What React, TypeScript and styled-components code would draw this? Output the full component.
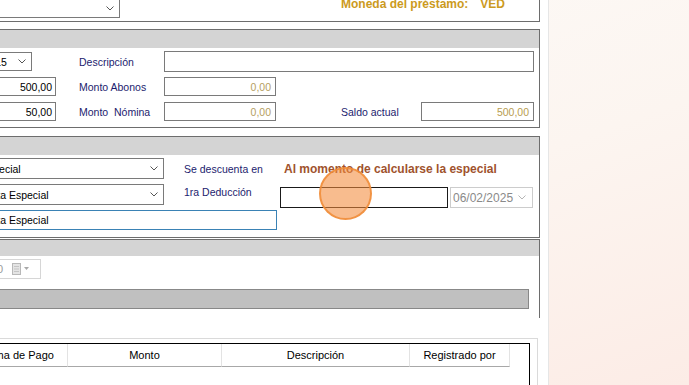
import React from 'react';
import styled, { createGlobalStyle } from 'styled-components';

const GlobalStyle = createGlobalStyle`
  html, body { margin: 0; padding: 0; }
  body { font-family: "Liberation Sans", Arial, sans-serif; font-size: 11px; color: #000; }
  * { box-sizing: border-box; }
`;

const Root = styled.div`
  position: relative;
  display: flex;
  width: 689px;
  height: 385px;
  overflow: hidden;
  background: linear-gradient(160deg, #fdfbf9 0%, #fcf5f0 55%, #fcece6 100%);
`;

const LeftPane = styled.div`
  flex: none;
  width: 549px;
  height: 100%;
  background: #fff;
  border-right: 1px solid #e6e6e6;
  overflow: hidden;
`;

const Form = styled.div`
  width: 640px;
  margin-left: -100px;
  display: flex;
  flex-direction: column;
`;

const Panel = styled.div<{ $mt?: number; $open?: 'top' | 'bottom' }>`
  margin-top: ${p => p.$mt ?? 0}px;
  border: 1px solid #6d6d6d;
  ${p => (p.$open === 'top' ? 'border-top: none;' : '')}
  ${p => (p.$open === 'bottom' ? 'border-bottom: none;' : '')}
  background: #fff;
`;

const PanelHeader = styled.div<{ $h: number }>`
  height: ${p => p.$h}px;
  background: #d4d4d4;
`;

const TopRow = styled.div`
  display: flex;
  align-items: flex-start;
  height: 21px;
`;

const Currency = styled.div`
  margin-left: 221px;
  margin-top: -2px;
  font-size: 12px;
  line-height: 12px;
  font-weight: bold;
  color: #cc9a1d;
  white-space: nowrap;
`;

const CurrencyCode = styled.span`
  margin-left: 12px;
`;

const ComboBox = styled.div<{ $w: number; $h: number; $ml?: number; $mt?: number; $pl?: number }>`
  flex: none;
  width: ${p => p.$w}px;
  height: ${p => p.$h}px;
  margin-left: ${p => p.$ml ?? 0}px;
  margin-top: ${p => p.$mt ?? 0}px;
  display: flex;
  align-items: center;
  justify-content: space-between;
  padding: 0 5px 0 ${p => p.$pl ?? 3}px;
  border: 1px solid #7a7a7a;
  background: #fff;
  font-size: 10.5px;
  white-space: nowrap;
  overflow: hidden;
`;

const TextBox = styled.div<{
  $w?: number;
  $h: number;
  $ml?: number;
  $mt?: number;
  $right?: boolean;
  $color?: string;
  $border?: string;
  $pr?: number;
  $pl?: number;
}>`
  flex: none;
  width: ${p => (p.$w ? `${p.$w}px` : '100%')};
  height: ${p => p.$h}px;
  margin-left: ${p => p.$ml ?? 0}px;
  margin-top: ${p => p.$mt ?? 0}px;
  display: flex;
  align-items: center;
  justify-content: ${p => (p.$right ? 'flex-end' : 'flex-start')};
  padding: 0 ${p => p.$pr ?? 3}px 0 ${p => p.$pl ?? 3}px;
  border: 1px solid ${p => p.$border ?? '#7a7a7a'};
  background: #fff;
  color: ${p => p.$color ?? '#000'};
  font-size: 10.5px;
  white-space: nowrap;
  overflow: hidden;
`;

const FieldGrid = styled.div`
  display: grid;
  grid-template-columns: 155px 23px 85px 112px 65px 80px 113px;
  grid-auto-rows: 21px;
  row-gap: 4px;
  align-items: center;
  padding: 3px 5px 5px 0;
`;

const Slot = styled.div<{ $col: number; $span?: number; $end?: boolean; $mr?: number }>`
  grid-column: ${p => p.$col} / span ${p => p.$span ?? 1};
  display: flex;
  align-items: center;
  justify-content: ${p => (p.$end ? 'flex-end' : 'flex-start')};
  padding-right: ${p => p.$mr ?? 0}px;
  min-width: 0;
`;

const Label = styled.span<{ $w?: number; $ml?: number; $lh?: number }>`
  flex: none;
  ${p => (p.$w ? `width: ${p.$w}px;` : '')}
  margin-left: ${p => p.$ml ?? 0}px;
  line-height: ${p => p.$lh ?? 14}px;
  font-size: 10.5px;
  color: #1c1c6e;
  white-space: nowrap;
`;

const Notice = styled.span`
  margin-left: 4px;
  font-size: 12px;
  font-weight: bold;
  color: #a0522d;
  white-space: nowrap;
`;

const Body = styled.div<{ $pad: string }>`
  display: flex;
  flex-direction: column;
  padding: ${p => p.$pad};
`;

const Row = styled.div<{ $h: number; $mt?: number; $top?: boolean }>`
  display: flex;
  align-items: ${p => (p.$top ? 'flex-start' : 'center')};
  height: ${p => p.$h}px;
  margin-top: ${p => p.$mt ?? 0}px;
`;

const DatePicker = styled.div<{ $w: number; $h: number; $ml?: number; $mt?: number }>`
  flex: none;
  width: ${p => p.$w}px;
  height: ${p => p.$h}px;
  margin-left: ${p => p.$ml ?? 0}px;
  margin-top: ${p => p.$mt ?? 0}px;
  display: flex;
  align-items: center;
  justify-content: space-between;
  padding: 0 6px 0 2px;
  border: 1px solid #cccccc;
  background: #fff;
  color: #8a8a8a;
  font-size: 12px;
`;

const SpinControl = styled.div`
  flex: none;
  width: 61px;
  height: 20px;
  margin-left: 79px;
  display: flex;
  align-items: center;
  padding-left: 16px;
  border: 1px solid #d6d6d6;
  color: #9a9a9a;
  font-size: 11px;
`;

const SpinIcon = styled.svg`
  margin-left: 9px;
`;

const Bar = styled.div`
  height: 20px;
  margin-top: 10px;
  background: #c0c0c0;
  border: 1px solid #888888;
`;

const TableFrame = styled.div`
  margin-top: 20px;
  margin-left: 60px;
  width: 578px;
  height: 60px;
  padding: 4px 7px 0 3px;
  border: 1px solid #dadada;
  border-bottom: none;
  background: #fff;
`;

const Grid = styled.div`
  height: 100%;
  border: 1px solid #000;
  border-bottom: none;
  background: #fff;
`;

const HeaderRow = styled.div`
  display: flex;
  height: 23px;
`;

const HeaderCell = styled.div<{ $w: number }>`
  flex: none;
  width: ${p => p.$w}px;
  height: 23px;
  display: flex;
  align-items: center;
  justify-content: center;
  border-right: 1px solid #e3e3e3;
  border-bottom: 1px solid #a8a8a8;
  font-size: 11px;
  color: #000;
  white-space: nowrap;
`;

const Highlight = styled.div`
  position: absolute;
  left: 319px;
  top: 167px;
  width: 53px;
  height: 53px;
  border-radius: 50%;
  background: rgba(243, 140, 60, 0.58);
  border: 2px solid rgba(240, 140, 55, 0.85);
  pointer-events: none;
`;

const RightPane = styled.div`
  flex: 1;
`;

const Chevron = ({ color = '#555' }: { color?: string }) => (
  <svg width="8" height="5" viewBox="0 0 8 5" style={{ flex: 'none' }}>
    <path d="M0.5 0.5 L4 4 L7.5 0.5" fill="none" stroke={color} strokeWidth="1" />
  </svg>
);

export default function App() {
  return (
    <>
      <GlobalStyle />
      <Root>
        <LeftPane>
          <Form>
            <Panel $open="top">
              <TopRow>
                <ComboBox $w={180} $h={19} $ml={39} $mt={-1}>
                  <span />
                  <Chevron />
                </ComboBox>
                <Currency>
                  Moneda del préstamo:<CurrencyCode>VED</CurrencyCode>
                </Currency>
              </TopRow>
            </Panel>

            <Panel $mt={7}>
              <PanelHeader $h={18} />
              <FieldGrid>
                <Slot $col={1} $end $mr={24}>
                  <ComboBox $w={60} $h={19}>
                    <span>Día 15</span>
                    <Chevron />
                  </ComboBox>
                </Slot>
                <Slot $col={3}>
                  <Label>Descripción</Label>
                </Slot>
                <Slot $col={4} $span={4}>
                  <TextBox $h={21} />
                </Slot>

                <Slot $col={1} $end>
                  <TextBox $w={100} $h={19} $right>500,00</TextBox>
                </Slot>
                <Slot $col={3}>
                  <Label>Monto Abonos</Label>
                </Slot>
                <Slot $col={4}>
                  <TextBox $h={19} $right $color="#b5a062" $pr={4}>0,00</TextBox>
                </Slot>

                <Slot $col={1} $end>
                  <TextBox $w={100} $h={19} $right>50,00</TextBox>
                </Slot>
                <Slot $col={3}>
                  <Label>Monto&nbsp; Nómina</Label>
                </Slot>
                <Slot $col={4}>
                  <TextBox $h={19} $right $color="#b5a062" $pr={4}>0,00</TextBox>
                </Slot>
                <Slot $col={6}>
                  <Label>Saldo actual</Label>
                </Slot>
                <Slot $col={7}>
                  <TextBox $h={19} $right $color="#b89d4f" $pr={4}>500,00</TextBox>
                </Slot>
              </FieldGrid>
            </Panel>

            <Panel $mt={8}>
              <PanelHeader $h={18} />
              <Body $pad="3px 0 7px 0">
                <Row $h={21}>
                  <ComboBox $w={187} $h={21} $ml={76}>
                    <span>Especial</span>
                    <Chevron />
                  </ComboBox>
                  <Label $w={96} $ml={20}>Se descuenta en</Label>
                  <Notice>Al momento de calcularse la especial</Notice>
                </Row>
                <Row $h={24} $mt={5} $top>
                  <ComboBox $w={187} $h={21} $ml={76} $pl={0}>
                    <span>Cuota Especial</span>
                    <Chevron />
                  </ComboBox>
                  <Label $w={96} $ml={20} $lh={16}>1ra Deducción</Label>
                  <TextBox $w={168} $h={21} $mt={3} $border="#1a1a1a" />
                  <DatePicker $w={83} $h={21} $ml={2} $mt={3}>
                    <span>06/02/2025</span>
                    <Chevron color="#b5b5b5" />
                  </DatePicker>
                </Row>
                <Row $h={20} $mt={2}>
                  <TextBox $w={300} $h={20} $ml={76} $pl={0} $border="#3a82b5">Cuota Especial</TextBox>
                </Row>
              </Body>
            </Panel>

            <Panel $mt={1} $open="bottom">
              <PanelHeader $h={16} />
              <Body $pad="3px 10px 9px 0">
                <Row $h={20}>
                  <SpinControl>
                    <span>0</span>
                    <SpinIcon width="18" height="12" viewBox="0 0 18 12">
                      <rect x="0.5" y="0.5" width="8" height="11" fill="#e4e4e4" stroke="#b8b8b8" />
                      <line x1="2" y1="3.5" x2="7" y2="3.5" stroke="#c4c4c4" />
                      <line x1="2" y1="6" x2="7" y2="6" stroke="#c4c4c4" />
                      <line x1="2" y1="8.5" x2="7" y2="8.5" stroke="#c4c4c4" />
                      <path d="M12 4 L17 4 L14.5 7 Z" fill="#a8a8a8" />
                    </SpinIcon>
                  </SpinControl>
                </Row>
                <Bar />
              </Body>
            </Panel>

            <TableFrame>
              <Grid>
                <HeaderRow>
                  <HeaderCell $w={103}>Forma de Pago</HeaderCell>
                  <HeaderCell $w={154}>Monto</HeaderCell>
                  <HeaderCell $w={188}>Descripción</HeaderCell>
                  <HeaderCell $w={100}>Registrado por</HeaderCell>
                </HeaderRow>
              </Grid>
            </TableFrame>
          </Form>
        </LeftPane>
        <RightPane />
        <Highlight />
      </Root>
    </>
  );
}
